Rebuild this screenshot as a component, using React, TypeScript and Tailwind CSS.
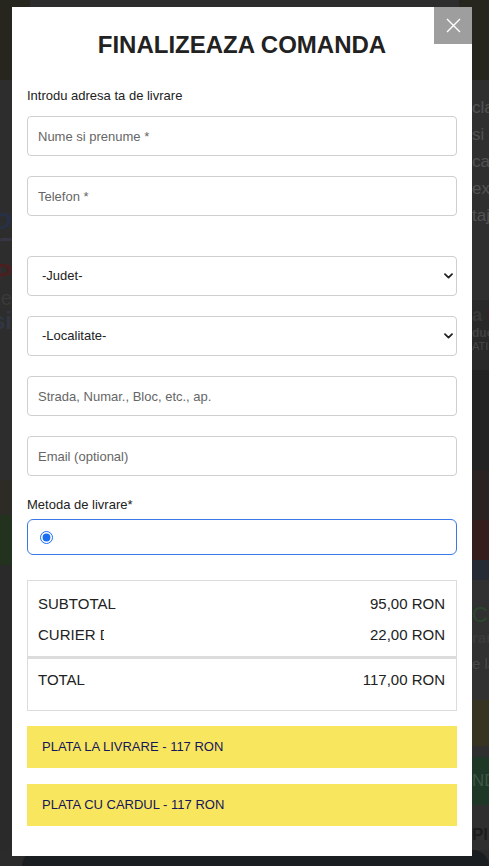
import type { InputHTMLAttributes, ReactNode, SelectHTMLAttributes } from 'react';

const font = "font-['Liberation_Sans',Arial,sans-serif]";

function TextField(props: InputHTMLAttributes<HTMLInputElement>) {
  return (
    <input
      className={`h-[40px] w-full rounded-[4px] border border-[#cfcfcf] bg-white px-[10px] text-[13px] text-[#222] outline-none placeholder:text-[#666] ${font}`}
      {...props}
    />
  );
}

function SelectBox({ children, ...props }: { children: ReactNode } & SelectHTMLAttributes<HTMLSelectElement>) {
  return (
    <div className="relative">
      <select
        className={`h-[40px] w-full appearance-none rounded-[4px] border border-[#cfcfcf] bg-white pl-[14px] text-[13px] text-[#222] outline-none ${font}`}
        {...props}
      >
        {children}
      </select>
      <svg
        className="pointer-events-none absolute right-[4px] top-1/2 -translate-y-1/2"
        width="9"
        height="6"
        viewBox="0 0 9 6"
        fill="none"
      >
        <path d="M1 1.2 4.5 4.6 8 1.2" stroke="#222" strokeWidth="1.8" strokeLinecap="round" strokeLinejoin="round" />
      </svg>
    </div>
  );
}

function SummaryRow({ label, value, clip }: { label: string; value: string; clip?: boolean }) {
  return (
    <div className="flex h-[31px] items-center justify-between leading-[31px]">
      <span className={clip ? 'w-[66px] overflow-hidden whitespace-nowrap' : ''}>{label}</span>
      <span>{value}</span>
    </div>
  );
}

function PayButton({ children }: { children: ReactNode }) {
  return (
    <button
      type="button"
      className={`flex h-[42px] w-full items-center bg-[#f9e65f] pl-[15px] text-left text-[13px] leading-[16px] text-[#15155c] ${font}`}
    >
      {children}
    </button>
  );
}

// dimmed storefront showing at the edges behind the checkout modal
function PageBehind() {
  return (
    <div className={`flex h-full flex-col ${font}`}>
      <div className="flex h-[850px]">
        <div className="flex w-[30px] flex-col overflow-hidden">
          <div className="h-[80px] bg-[#27261e]" />
          <div className="flex h-[400px] flex-col bg-[#2d2d2d] pt-[122px]">
            <div className="flex justify-end pr-[18px] text-[30px] font-bold italic leading-[34px] text-[#283046]">
              <span className="whitespace-nowrap">Yello</span>
            </div>
            <div className="mt-[2px] h-[3px] w-[12px] rounded-full bg-[#363644]" />
            <div className="mt-[18px] flex justify-end pr-[18px] text-[26px] font-bold leading-[28px] text-[#4a1f1f]">
              <span className="whitespace-nowrap">TOP</span>
            </div>
            <div className="flex justify-end pr-[18px] text-[20px] leading-[22px] text-[#3a3a3a]">
              <span className="whitespace-nowrap">ne</span>
            </div>
            <div className="flex justify-end pr-[18px] text-[24px] font-bold leading-[24px] text-[#313742]">
              <span className="whitespace-nowrap">asi</span>
            </div>
          </div>
          <div className="h-[35px] bg-[#2c2b26]" />
          <div className="h-[50px] bg-[#23321f]" />
          <div className="flex-1 bg-[#2a2a2a]" />
        </div>

        <div className="flex-1 bg-[#2d2d2d]" />

        <div className="flex w-[30px] flex-col overflow-hidden">
          <div className="h-[80px] bg-[#27261e]" />
          <div className="flex h-[220px] flex-col whitespace-nowrap bg-[#2f2f2f] pl-[13px] pt-[14px] text-[17px] leading-[27px] text-[#525252]">
            <span>clasic</span>
            <span>si noi</span>
            <span>casa</span>
            <span>extra</span>
            <span>taje</span>
          </div>
          <div className="flex h-[70px] flex-col whitespace-nowrap bg-[#292929] pl-[13px] pt-[4px]">
            <span className="text-[18px] font-bold leading-[22px] text-[#3a3a3a]">
              a <span className="text-[#521d1d]">P</span>
            </span>
            <span className="text-[12px] font-bold leading-[14px] text-[#424242]">duc</span>
            <span className="text-[11px] leading-[13px] text-[#474747]">ATI</span>
          </div>
          <div className="h-[100px] bg-[#232323]" />
          <div className="h-[50px] bg-[#2b2222]" />
          <div className="h-[40px] bg-[#351d1d]" />
          <div className="h-[20px] bg-[#262a34]" />
          <div className="flex h-[120px] flex-col whitespace-nowrap bg-[#313131] pl-[13px] pt-[22px]">
            <span className="text-[22px] leading-[26px] text-[#2d472d]">C</span>
            <span className="text-[15px] font-bold leading-[20px] text-[#3b3b3b]">rare</span>
            <span className="mt-[6px] text-[15px] leading-[20px] text-[#484848]">e la</span>
          </div>
          <div className="h-[46px] bg-[#373522]" />
          <div className="h-[11px] bg-[#2f2f2f]" />
          <div className="flex h-[48px] items-center whitespace-nowrap bg-[#1f3727] pl-[13px] text-[17px] text-[#3c5644]">
            ND
          </div>
          <div className="flex flex-1 items-end whitespace-nowrap bg-[#2f2f2f] pb-[3px] pl-[13px] text-[17px] font-bold text-[#1c1c1c]">
            Pl
          </div>
        </div>
      </div>
      <div className="flex flex-1 bg-[#2b2b2b]">
        <div className="ml-[22px] flex-1 rounded-t-[18px] bg-[#1b1e21]" />
      </div>
    </div>
  );
}

export default function App() {
  return (
    <div className="relative h-[866px] w-full overflow-hidden bg-[#2b2b2b]">
      <PageBehind />

      <div className={`absolute left-[12px] top-[7px] w-[460px] bg-white px-[15px] pb-[30px] ${font}`}>
        <button
          type="button"
          aria-label="Inchide"
          className="absolute right-0 top-0 flex h-[37px] w-[38px] items-center justify-center bg-[#9e9e9e]"
        >
          <svg width="15" height="15" viewBox="0 0 15 15" fill="none">
            <path d="M1 1l13 13M14 1 1 14" stroke="#fff" strokeWidth="1.4" />
          </svg>
        </button>

        <h2 className="pt-[26px] text-center text-[24px] font-bold leading-[24px] text-[#222]">
          FINALIZEAZA COMANDA
        </h2>

        <p className="mt-[31px] text-[13px] leading-[16px] text-[#222]">Introdu adresa ta de livrare</p>

        <div className="mt-[12px] flex flex-col">
          <TextField placeholder="Nume si prenume *" />
          <div className="mt-[20px]">
            <TextField placeholder="Telefon *" />
          </div>
          <div className="mt-[40px]">
            <SelectBox defaultValue="">
              <option value="">-Judet-</option>
            </SelectBox>
          </div>
          <div className="mt-[20px]">
            <SelectBox defaultValue="">
              <option value="">-Localitate-</option>
            </SelectBox>
          </div>
          <div className="mt-[20px]">
            <TextField placeholder="Strada, Numar., Bloc, etc., ap." />
          </div>
          <div className="mt-[20px]">
            <TextField placeholder="Email (optional)" />
          </div>
        </div>

        <p className="mt-[21px] text-[13px] leading-[16px] text-[#222]">Metoda de livrare*</p>
        <label className="mt-[6px] flex h-[36px] items-center rounded-[6px] border border-[#3a78ea] pl-[12px]">
          <input type="radio" name="livrare" defaultChecked className="h-[13px] w-[13px] accent-[#1a6ef2]" />
        </label>

        <div className="mt-[25px] border border-[#dcdcdc] text-[15px] text-[#222]">
          <div className="pb-[6px] pl-[10px] pr-[11px] pt-[7px]">
            <SummaryRow label="SUBTOTAL" value="95,00 RON" />
            <SummaryRow label="CURIER DPD" value="22,00 RON" clip />
          </div>
          <div className="h-[3px] bg-[#dcdcdc]" />
          <div className="pb-[15px] pl-[10px] pr-[11px] pt-[5px]">
            <SummaryRow label="TOTAL" value="117,00 RON" />
          </div>
        </div>

        <div className="mt-[15px] flex flex-col gap-[16px]">
          <PayButton>PLATA LA LIVRARE - 117 RON</PayButton>
          <PayButton>PLATA CU CARDUL - 117 RON</PayButton>
        </div>
      </div>
    </div>
  );
}
